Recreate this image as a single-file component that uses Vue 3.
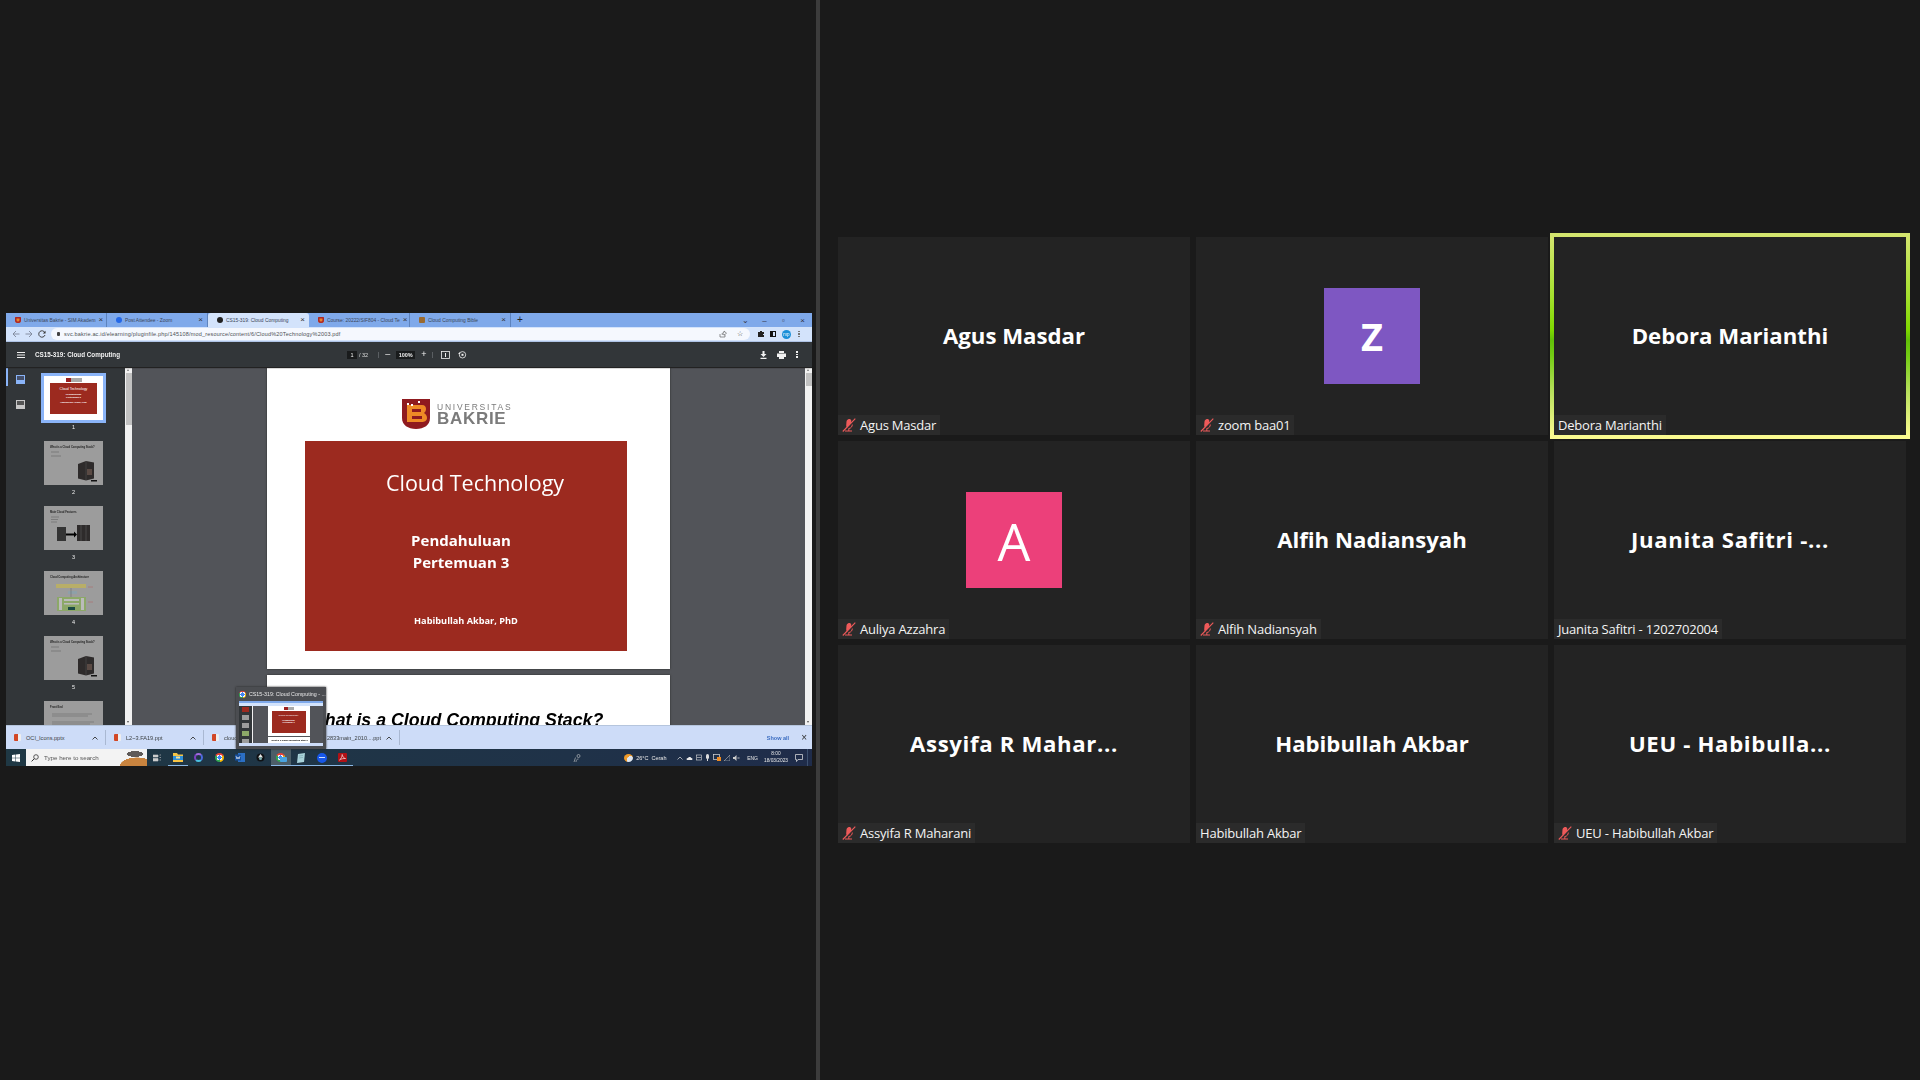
<script setup>
const tiles = [
  { name: 'Agus Masdar', label: 'Agus Masdar', muted: true },
  { name: 'Z', label: 'zoom baa01', muted: true, avatar: '#7e57c2', size: 'bold' },
  { name: 'Debora Marianthi', label: 'Debora Marianthi', active: true },
  { name: 'A', label: 'Auliya Azzahra', muted: true, avatar: '#ec407a', size: 'large' },
  { name: 'Alfih Nadiansyah', label: 'Alfih Nadiansyah', muted: true },
  { name: 'Juanita Safitri -...', label: 'Juanita Safitri - 1202702004', cut: true },
  { name: 'Assyifa R Mahar...', label: 'Assyifa R Maharani', muted: true, cut: true },
  { name: 'Habibullah Akbar', label: 'Habibullah Akbar' },
  { name: 'UEU - Habibulla...', label: 'UEU - Habibullah Akbar', muted: true, cut: true },
]

const tabs = [
  { title: 'Universitas Bakrie - SIM Akadem', icon: 'ub' },
  { title: 'Post Attendee - Zoom', icon: 'zm' },
  { title: 'CS15-319: Cloud Computing', icon: 'globe', active: true },
  { title: 'Course: 20222/SIF804 - Cloud Te', icon: 'ub' },
  { title: 'Cloud Computing Bible', icon: 'book' },
]

const thumbs = [
  { n: 1, kind: 'cover' },
  { n: 2, kind: 'tower', title: 'What is a Cloud Computing Stack?' },
  { n: 3, kind: 'servers', title: 'Main Cloud Features' },
  { n: 4, kind: 'arch', title: 'Cloud Computing Architecture' },
  { n: 5, kind: 'tower', title: 'What is a Cloud Computing Stack?' },
  { n: 6, kind: 'text', title: 'Front End' },
]

const downloads = [
  { file: 'OCI_Icons.pptx', width: 100 },
  { file: 'L2~3.FA19.ppt', width: 98 },
  { file: 'cloud', tail: '2833main_2010....ppt', width: 196 },
]
</script>

<template>
  <div class="meeting">
    <section class="share-pane">
      <div class="share">
        <div class="tabstrip">
          <div v-for="t in tabs" :key="t.title + t.icon" class="tab" :class="{ on: t.active }">
            <span class="fav" :class="t.icon"></span>
            <span class="tab-title">{{ t.title }}</span>
            <span class="tab-x">×</span>
          </div>
          <span class="tab-plus">+</span>
          <span class="grow"></span>
          <span class="win">⌄</span><span class="win">–</span><span class="win">▫</span><span class="win">×</span>
        </div>

        <div class="addrbar">
          <svg class="nav" width="8" height="8" viewBox="0 0 8 8"><path d="M7.500 4H1M4 1L1 4l3 3" fill="none" stroke="#7d8798" stroke-width=".9"/></svg>
          <svg class="nav" width="8" height="8" viewBox="0 0 8 8"><path d="M.5 4H7M4 1l3 3-3 3" fill="none" stroke="#7d8798" stroke-width=".9"/></svg>
          <svg class="nav" width="8" height="8" viewBox="0 0 8 8"><path d="M6.800 2.500A3.200 3.200 0 1 0 7 5" fill="none" stroke="#333" stroke-width=".9"/><path d="M7.500.8v2.700H4.800z" fill="#333"/></svg>
          <div class="omnibox">
            <span class="lock"></span>
            <span class="url">svc.bakrie.ac.id/elearning/pluginfile.php/145108/mod_resource/content/6/Cloud%20Technology%2003.pdf</span>
            <span class="grow"></span>
            <svg width="8" height="8" viewBox="0 0 8 8"><path d="M1 4v3h5V5M3 4.500C3 3 4 2.500 5 2.500V1l2.500 2.200L5 5.200V4C4 4 3.500 4 3 4.500z" fill="none" stroke="#666" stroke-width=".7"/></svg>
            <span class="star">☆</span>
          </div>
          <svg class="ext" width="8" height="8" viewBox="0 0 8 8"><path d="M1 2h2V1h2v1h2v2H6v1h1v2H1z" fill="#222"/></svg>
          <span class="sidepanel"></span>
          <span class="profile">mp</span>
          <span class="kebab dark"><i></i><i></i><i></i></span>
        </div>

        <div class="pdfbar">
          <svg class="burger" width="8" height="6" viewBox="0 0 8 6"><path d="M0 .5h8M0 3h8M0 5.500h8" stroke="#f1f1f1"/></svg>
          <span class="doc-title">CS15-319: Cloud Computing</span>
          <div class="pdf-center">
            <span class="pagebox">1</span>
            <span class="pagecount">/ 32</span>
            <span class="vsep"></span>
            <span class="zoom-btn">–</span>
            <span class="zoombox">100%</span>
            <span class="zoom-btn">+</span>
            <span class="vsep"></span>
            <svg class="fit" width="9" height="8" viewBox="0 0 9 8"><rect x=".5" y=".5" width="8" height="7" fill="none" stroke="#f1f1f1" stroke-width=".8"/><path d="M4.500 2v4" stroke="#f1f1f1"/></svg>
            <svg class="rot" width="9" height="9" viewBox="0 0 9 9"><circle cx="4.500" cy="4.800" r="3.200" fill="none" stroke="#f1f1f1" stroke-width=".8"/><path d="M0 4l2-2v2z" fill="#f1f1f1"/><rect x="3.500" y="3.800" width="2" height="2" fill="#f1f1f1"/></svg>
          </div>
          <div class="pdf-right">
            <svg width="7" height="8" viewBox="0 0 7 8"><path d="M2.500 0h2v3H6.500L3.500 6 .5 3h2zM.5 6.800h6V8h-6z" fill="#f1f1f1"/></svg>
            <svg width="9" height="8" viewBox="0 0 9 8"><path d="M2 0h5v2H2zM0 2.500h9V6H7v2H2V6H0z" fill="#f1f1f1"/></svg>
            <span class="kebab"><i></i><i></i><i></i></span>
          </div>
        </div>

        <div class="pdfbody">
          <aside class="sidebar">
            <div class="rail">
              <span class="rail-mark"></span>
              <span class="rail-icon blue"></span>
              <span class="rail-icon"></span>
            </div>
            <div class="thumblist">
              <div v-for="t in thumbs" :key="t.n" class="thumbitem">
                <div class="thumb" :class="{ current: t.kind === 'cover' }">
                  <template v-if="t.kind === 'cover'">
                    <span class="tc-logo"></span>
                    <div class="tc-red">
                      <span class="tc-title">Cloud Technology</span>
                      <span class="tc-sub">Pendahuluan<br>Pertemuan 3</span>
                      <span class="tc-sub">Habibullah Akbar, PhD</span>
                    </div>
                  </template>
                  <svg v-else width="59" height="44" viewBox="0 0 59 44">
                    <text x="6" y="7" font-size="2.700" font-weight="700" font-family="Liberation Sans" fill="#222">{{ t.title }}</text>
                    <g v-if="t.kind === 'tower'">
                      <path d="M7 11h8M7 15h10" stroke="#666" stroke-width=".6"/>
                      <path d="M34 23l8-3 8 1.500v16l-8 2-8-2z" fill="#2e2b2b"/>
                      <path d="M42 20v19" stroke="#555" stroke-width=".5"/>
                      <rect x="43" y="28" width="5" height="6" fill="#5a4a44"/>
                      <rect x="47" y="39" width="6" height="1.500" fill="#111"/>
                    </g>
                    <g v-else-if="t.kind === 'servers'">
                      <path d="M7 11h8M7 13.500h7M7 16h6" stroke="#666" stroke-width=".6"/>
                      <rect x="13" y="21" width="9" height="14" fill="#343434"/>
                      <path d="M22 27.500h8v-2l3 3-3 3v-2h-8z" fill="#000"/>
                      <rect x="33" y="19" width="13" height="16" fill="#2e2b2b"/>
                      <path d="M37 19v16M42 19v16" stroke="#666" stroke-width=".5"/>
                    </g>
                    <g v-else-if="t.kind === 'arch'">
                      <rect x="12" y="13" width="30" height="4" fill="#b8ae68"/>
                      <rect x="24" y="20" width="9" height="3" fill="#8ea0a8"/>
                      <path d="M27 17v9" stroke="#666" stroke-width=".5"/>
                      <rect x="13" y="26" width="29" height="14" fill="#8ca868"/>
                      <rect x="15" y="27" width="3" height="12" fill="#bbb"/>
                      <rect x="37" y="27" width="3" height="12" fill="#bbb"/>
                      <rect x="20" y="28" width="15" height="2" fill="#bbb"/>
                      <rect x="20" y="32" width="15" height="1.500" fill="#bbb"/>
                      <rect x="24" y="36" width="7" height="3" fill="#1c4a44"/>
                      <path d="M44 16h5M44 31h5" stroke="#a77" stroke-width=".8"/>
                    </g>
                    <g v-else>
                      <path d="M8 13h40M8 15h36M8 21h42M8 23h38M8 25h30" stroke="#6c6c6c" stroke-width=".6"/>
                    </g>
                  </svg>
                </div>
                <span class="thumbno">{{ t.n }}</span>
              </div>
            </div>
          </aside>

          <div class="scroll left">
            <span class="sc-up"></span><span class="sc-thumb long"></span><span class="grow"></span><span class="sc-down"></span>
          </div>

          <div class="viewer">
            <div class="page first">
              <div class="brand">
                <svg class="shield" width="28" height="30" viewBox="0 0 28 30">
                  <path d="M0 0h28v19c0 7-6 11-14 11S0 26 0 19z" fill="#8f1a1f"/>
                  <path d="M5 6h15c3 0 4 2 4 4s-1 3-2 4c2 1 3 3 3 5 0 3-3 4-5 4H5zM10 10v3h9v-3zM10 17v3h10v-3z" fill="#ee8a26"/>
                  <rect x="5" y="4" width="2" height="2" fill="#fff"/><rect x="9" y="5" width="2" height="2" fill="#fff"/><rect x="16" y="2" width="2" height="2" fill="#fff"/>
                </svg>
                <div class="brand-text">
                  <span class="uni">UNIVERSITAS</span>
                  <span class="bakrie">BAKRIE</span>
                </div>
              </div>
              <div class="slide">
                <h1>Cloud Technology</h1>
                <p class="sub">Pendahuluan<br>Pertemuan 3</p>
                <p class="presenter">Habibullah Akbar, PhD</p>
              </div>
            </div>
            <div class="page second">
              <h2>What is a Cloud Computing Stack?</h2>
            </div>
          </div>

          <div class="scroll">
            <span class="sc-up"></span><span class="sc-thumb"></span><span class="grow"></span><span class="sc-down"></span>
          </div>
        </div>

        <div class="downloads">
          <div v-for="d in downloads" :key="d.file" class="dl" :style="{ width: d.width + 'px' }">
            <span class="ppt"></span>
            <span class="dl-name">{{ d.file }}</span>
            <span v-if="d.tail" class="dl-tail">{{ d.tail }}</span>
            <svg width="6" height="4" viewBox="0 0 6 4"><path d="M.5 3.500L3 1l2.500 2.500" fill="none" stroke="#333" stroke-width=".9"/></svg>
          </div>
          <span class="grow"></span>
          <span class="showall">Show all</span>
          <span class="dl-x">×</span>
        </div>

        <div class="taskbar">
          <div class="start">
            <svg width="8" height="8" viewBox="0 0 8 8"><path d="M0 1l3.500-.5V3.700H0zM4 .4L8 0v3.700H4zM0 4.200h3.500v3.300L0 7zM4 4.200h4V8l-4-.5z" fill="#fff"/></svg>
          </div>
          <div class="search">
            <svg width="8" height="8" viewBox="0 0 8 8"><circle cx="5" cy="3" r="2.300" fill="none" stroke="#333" stroke-width=".8"/><path d="M3.300 4.700L.6 7.400" stroke="#333"/></svg>
            <span>Type here to search</span>
            <span class="grow"></span>
            <span class="search-art"></span>
          </div>
          <div class="tb-icons">
            <span class="tb"><svg width="9" height="8" viewBox="0 0 9 8"><path d="M0 1h5v2H0zM0 4.500h5v2.500H0zM6.500 1H8M6.500 3.500H8M6.500 6H8" fill="#ccc" stroke="#ccc" stroke-width=".6"/></svg></span>
            <span class="tb open"><svg width="10" height="9" viewBox="0 0 10 9"><path d="M0 0h4l1 1.500h5V9H0z" fill="#f6c445"/><rect y="3" width="10" height="4" fill="#2f8fd8"/><rect x="3" y="3.500" width="4" height="2" fill="#f6e39b"/></svg></span>
            <span class="tb"><span class="cortana"></span></span>
            <span class="tb"><span class="chrome"></span></span>
            <span class="tb"><svg width="10" height="9" viewBox="0 0 10 9"><rect x="3" width="7" height="9" fill="#2b6fc4"/><rect y="1.500" width="6" height="6" fill="#174f9c"/><path d="M1 3l1 3 1-2 1 2 1-3" fill="none" stroke="#fff" stroke-width=".6"/></svg></span>
            <span class="tb"><svg width="9" height="9" viewBox="0 0 9 9"><circle cx="4.500" cy="4.500" r="4" fill="#0f1114"/><path d="M4.500 1L7 4.500H2z" fill="#e8e8e8"/><circle cx="4.500" cy="5.500" r="1.500" fill="#7aa"/></svg></span>
            <span class="tb current open"><span class="chrome"><i class="overlay"></i></span></span>
            <span class="tb open"><svg width="10" height="10" viewBox="0 0 10 10"><path d="M2 1l7-1-1 9-7 1z" fill="#a9d3da"/><path d="M3 3l4-.6M3 5l4-.6" stroke="#6f9ba6" stroke-width=".5"/></svg></span>
            <span class="tb open"><span class="zoomdot"></span></span>
            <span class="tb open"><svg width="9" height="9" viewBox="0 0 9 9"><rect width="9" height="9" rx="1" fill="#b01116"/><path d="M1.500 7C3 6 4.500 3 4.200 1.500 4 3 6 5.500 7.500 5.500 6 5.300 3 5.800 1.500 7z" fill="none" stroke="#fff" stroke-width=".6"/></svg></span>
          </div>
          <span class="grow"></span>
          <svg class="people" width="8" height="8" viewBox="0 0 8 8"><circle cx="5.500" cy="2" r="1.500" fill="none" stroke="#ccc" stroke-width=".6"/><path d="M3 8c0-2 1-3 2.500-3M1 8l1.500-4.500" stroke="#ccc" stroke-width=".6" fill="none"/></svg>
          <span class="weather"></span>
          <span class="temp">26°C &nbsp;Cerah</span>
          <div class="tray">
            <svg width="6" height="4" viewBox="0 0 6 4"><path d="M.5 3.500L3 1l2.500 2.500" fill="none" stroke="#ddd" stroke-width=".7"/></svg>
            <svg width="7" height="4" viewBox="0 0 7 4"><path d="M1 4C0 3 .5 2 2 2c.3-1.500 3-1.500 3.300 0C6.500 2 7 3 6 4z" fill="#e8e8e8"/></svg>
            <svg width="6" height="7" viewBox="0 0 6 7"><rect x=".5" y="1" width="5" height="5" fill="none" stroke="#ddd" stroke-width=".6"/><path d="M1 3.500h4" stroke="#ddd" stroke-width=".6"/></svg>
            <svg width="5" height="7" viewBox="0 0 5 7"><rect x="1" width="3" height="5" rx="1.500" fill="#ddd"/><path d="M2.500 5v2" stroke="#ddd"/></svg>
            <svg width="8" height="7" viewBox="0 0 8 7"><rect x=".5" y=".5" width="6" height="5" fill="none" stroke="#ddd" stroke-width=".7"/><rect x="4" y="3" width="4" height="4" fill="#ed8a21"/></svg>
            <svg width="6" height="6" viewBox="0 0 6 6"><path d="M0 6L6 0v6z" fill="none" stroke="#bbb" stroke-width=".6"/></svg>
            <svg width="7" height="6" viewBox="0 0 7 6"><path d="M0 2h1.500L3.500 0v6L1.500 4H0z" fill="#ccc"/><path d="M4.500 2l2 2M6.500 2l-2 2" stroke="#ccc" stroke-width=".5"/></svg>
          </div>
          <span class="lang">ENG</span>
          <span class="clock">8:00<br>18/03/2023</span>
          <svg class="notif" width="8" height="8" viewBox="0 0 8 8"><path d="M.5.500h7v5H3L1.500 7.500v-2h-1z" fill="none" stroke="#e8e8e8" stroke-width=".7"/></svg>
          <span class="corner"></span>
        </div>

        <div class="preview">
          <div class="preview-head">
            <span class="chrome"></span>
            <span>CS15-319: Cloud Computing - ...</span>
          </div>
          <div class="preview-shot">
            <div class="ps-top"></div>
            <div class="ps-body">
              <div class="ps-side">
                <i class="red"></i><i></i><i></i><i class="green"></i><i></i>
              </div>
              <div class="ps-main">
                <div class="ps-page">
                  <span class="ps-logo"></span>
                  <div class="ps-red">
                    <span>Cloud Technology</span>
                    <span class="ps-small">Pendahuluan<br>Pertemuan 3</span>
                  </div>
                </div>
                <div class="ps-page2">What is a Cloud Computing Stack?</div>
              </div>
            </div>
            <div class="ps-bottom"></div>
          </div>
        </div>
      </div>
    </section>

    <div class="divider"></div>

    <section class="gallery">
      <div class="grid">
        <div v-for="t in tiles" :key="t.label" class="tile" :class="{ active: t.active }">
          <div v-if="t.avatar" class="avatar" :class="t.size" :style="{ background: t.avatar }">{{ t.name }}</div>
          <div v-else class="bigname" :class="{ cut: t.cut }">{{ t.name }}</div>
          <div class="label">
            <svg v-if="t.muted" class="mute" width="14" height="14" viewBox="0 0 14 14">
              <path d="M6 1.500c1.300-.8 3-.3 3.300 1.200L9 5 5 9.500c-.6-.5-.8-1.200-.8-2L4.500 3.500C4.600 2.700 5.200 1.900 6 1.500z" fill="#ee5a5a"/>
              <path d="M3 13h7M6.800 10.500V13M10.300 6.500c0 2-1.400 4-3.600 4" fill="none" stroke="#ee5a5a" stroke-width="1"/>
              <path d="M.8 13.500L13.300.6" stroke="#ee5a5a" stroke-width="1.100"/>
            </svg>
            <span>{{ t.label }}</span>
          </div>
        </div>
      </div>
    </section>
  </div>
</template>

<style>
html, body {
  margin: 0;
  background: #1a1a1a;
}
</style>

<style scoped>
.meeting {
  display: flex;
  width: 1920px;
  height: 1080px;
  overflow: hidden;
  background: #1a1a1a;
  font-family: "Open Sans", "Liberation Sans", sans-serif;
}

.grow { flex: 1; }

/* left side: shared screen */
.share-pane {
  width: 816px;
  flex: none;
  display: flex;
  align-items: center;
  box-sizing: border-box;
  padding: 0 4px 1px 6px;
}

.share {
  position: relative;
  width: 806px;
  height: 453px;
  display: flex;
  flex-direction: column;
  filter: blur(0.3px);
  font-family: "Liberation Sans", sans-serif;
  overflow: hidden;
}

.tabstrip {
  height: 14px;
  flex: none;
  display: flex;
  align-items: center;
  background: #7fa9ea;
  color: #333;
  font-size: 4.900px;
}

.tab {
  width: 101px;
  height: 14px;
  box-sizing: border-box;
  display: flex;
  align-items: center;
  gap: 3px;
  padding: 0 4px 0 9px;
  border-right: 1px solid #5d83bd;
  color: #3c4658;
}

.tab.on {
  background: #d3e3fb;
  border-radius: 3px 3px 0 0;
  border-right: none;
}

.tab-title {
  flex: 1;
  white-space: nowrap;
}

.tab-x { font-size: 8px; line-height: 8px; color: #333; }

.fav {
  width: 6px;
  height: 6px;
  flex: none;
  border-radius: 1px;
}
.fav.ub { background: #a8252a; border-radius: 1px 1px 3px 3px; box-shadow: inset 0 0 0 1.500px #a8252a, inset 0 0 0 3px #e8842a; }
.fav.zm { background: #2468e8; border-radius: 50%; }
.fav.globe { background: #222; border-radius: 50%; }
.fav.book { background: #9a6a30; }

.tab-plus {
  margin-left: 6px;
  font-size: 10px;
  line-height: 10px;
  color: #222;
}

.win {
  width: 19px;
  text-align: center;
  font-size: 8px;
  color: #334;
}

.addrbar {
  height: 15px;
  flex: none;
  display: flex;
  align-items: center;
  background: #d3e3fb;
  border-bottom: 1px solid #aec3e6;
  box-sizing: border-box;
}

.nav {
  width: 8px;
  margin-left: 5px;
  flex: none;
}
.nav:first-child { margin-left: 6px; }

.omnibox {
  width: 699px;
  margin-left: 5px;
  height: 12px;
  border-radius: 6px;
  background: #f5f8fe;
  display: flex;
  align-items: center;
  gap: 4px;
  padding: 0 4px 0 6px;
  box-sizing: border-box;
}

.lock {
  width: 3px;
  height: 4px;
  background: #444;
  border-radius: 1px;
}

.url {
  font-size: 5.500px;
  color: #4c5054;
  white-space: nowrap;
  letter-spacing: 0.19px;
}

.star { font-size: 7px; color: #333; margin: 0 3px 0 6px; }
.ext { margin-left: 7px; }

.sidepanel {
  width: 6px;
  height: 6px;
  margin-left: 5px;
  border: 1px solid #111;
  border-left-width: 3px;
  box-sizing: border-box;
}

.profile {
  width: 9px;
  height: 9px;
  margin-left: 6px;
  border-radius: 50%;
  background: #1a8fd8;
  color: #fff;
  font-size: 4.500px;
  line-height: 9px;
  text-align: center;
}

.kebab {
  display: inline-flex;
  flex-direction: column;
  gap: 1px;
  width: 2px;
}
.kebab i {
  width: 1.500px;
  height: 1.500px;
  background: #f1f1f1;
}
.kebab.dark { margin-left: 7px; }
.kebab.dark i { background: #777; }

.pdfbar {
  height: 25px;
  flex: none;
  position: relative;
  display: flex;
  align-items: center;
  background: #323639;
  color: #f1f1f1;
  box-shadow: 0 1px 1px #222;
  z-index: 1;
}

.burger { margin-left: 11px; }

.doc-title {
  margin-left: 10px;
  font-size: 6.300px;
  font-weight: 700;
  width: 312px;
  white-space: nowrap;
}

.pdf-center {
  display: flex;
  align-items: center;
  gap: 6px;
  font-size: 5.500px;
}

.pagebox {
  width: 10px;
  height: 8px;
  line-height: 8px;
  text-align: center;
  background: #191b1c;
}

.pagecount { margin-right: 4px; color: #ddd; margin-left: -4px; }

.vsep {
  width: 1px;
  height: 6px;
  background: #5a5e62;
}

.zoom-btn {
  font-size: 9px;
  line-height: 9px;
}

.zoombox {
  width: 19px;
  height: 8px;
  line-height: 8px;
  text-align: center;
  background: #191b1c;
  font-weight: 700;
}

.fit { margin-left: 2px; }
.rot { margin-left: 2px; }

.pdf-right {
  margin-left: auto;
  margin-right: 14px;
  display: flex;
  align-items: center;
  gap: 10px;
}

.pdfbody {
  height: 358px;
  flex: none;
  display: flex;
  background: #525459;
  overflow: hidden;
}

.sidebar {
  width: 119px;
  flex: none;
  display: flex;
  background: #323639;
  overflow: hidden;
}

.rail {
  width: 28px;
  flex: none;
  position: relative;
  display: flex;
  flex-direction: column;
  align-items: center;
  gap: 16px;
  padding-top: 8px;
}

.rail-mark {
  position: absolute;
  left: 0;
  top: 0;
  width: 2px;
  height: 19px;
  background: #8ab4f8;
}

.rail-icon {
  width: 7px;
  height: 7px;
  border: 1px solid #c8c8c8;
  background: linear-gradient(#555 55%, #c8c8c8 55%);
}
.rail-icon.blue {
  border-color: #8ab4f8;
  background: linear-gradient(#45506a 55%, #8ab4f8 55%);
}

.thumblist {
  padding: 9px 0 0 10px;
  color: #f1f1f1;
}

.thumbitem {
  width: 59px;
  height: 65px;
  text-align: center;
}

.thumb {
  width: 59px;
  height: 44px;
  background: #9c9c9c;
  overflow: hidden;
}

.thumb.current {
  background: #fff;
  box-shadow: 0 0 0 3px #8ab4f8;
  display: flex;
  flex-direction: column;
  align-items: center;
}

.tc-logo {
  width: 16px;
  height: 4px;
  margin: 2px 0 1px;
  background: linear-gradient(90deg, #9a2020 30%, #aaa 30%);
}

.tc-red {
  width: 47px;
  height: 31px;
  background: #9c2a1f;
  color: #fff;
  display: flex;
  flex-direction: column;
  align-items: center;
  gap: 2px;
  padding-top: 4px;
  box-sizing: border-box;
}

.tc-title { font-size: 3.500px; }
.tc-sub { font-size: 2.500px; font-weight: 700; line-height: 3px; }

.thumbno {
  display: block;
  height: 14px;
  line-height: 14px;
  font-size: 5.500px;
}

.scroll {
  width: 7px;
  flex: none;
  display: flex;
  flex-direction: column;
  align-items: stretch;
  background: #f1f1f1;
}

.sc-up, .sc-down {
  height: 6px;
  position: relative;
}
.sc-up::after, .sc-down::after {
  content: "";
  position: absolute;
  left: 2px;
  top: 2px;
  border-left: 1.500px solid transparent;
  border-right: 1.500px solid transparent;
}
.sc-up::after { border-bottom: 2px solid #777; }
.sc-down::after { border-top: 2px solid #505050; }

.sc-thumb {
  height: 13px;
  margin: 0 .5px;
  background: #c1c1c1;
}
.sc-thumb.long { height: 52px; }

.viewer {
  flex: 1;
  min-width: 0;
  display: flex;
  flex-direction: column;
  align-items: flex-start;
  gap: 6px;
  padding-left: 135px;
  overflow: hidden;
}

.page {
  width: 403px;
  flex: none;
  background: #fff;
  box-shadow: 0 0 2px #2a2a2a;
  box-sizing: border-box;
}

.page.first {
  height: 302px;
  padding: 32px 43px 0 38px;
}

.brand {
  display: flex;
  align-items: center;
  gap: 7px;
  height: 30px;
  margin-left: 97px;
}

.brand-text {
  display: flex;
  flex-direction: column;
  color: #7b7b7b;
}

.uni {
  font-size: 8.500px;
  line-height: 9px;
  letter-spacing: 1.750px;
  white-space: nowrap;
}

.bakrie {
  font-size: 17px;
  line-height: 14px;
  font-weight: 700;
  letter-spacing: 0.7px;
}

.slide {
  width: 322px;
  height: 210px;
  margin-top: 12px;
  background: #9c2a1f;
  color: #fff;
  font-family: "Open Sans", sans-serif;
  overflow: hidden;
}

.slide h1 {
  margin: 26px 0 0 0;
  padding-left: 18px;
  text-align: center;
  font-size: 21.500px;
  line-height: 32px;
  font-weight: 400;
}

.slide .sub {
  margin: 31px 0 0 0;
  padding-right: 10px;
  text-align: center;
  font-size: 15px;
  line-height: 21.500px;
  font-weight: 700;
}

.slide .presenter {
  margin: 41px 0 0 0;
  text-align: center;
  font-size: 9.200px;
  line-height: 14px;
  font-weight: 700;
}

.page.second {
  height: 120px;
  padding: 35px 0 0 41px;
}

.page.second h2 {
  margin: 0;
  font-size: 17.800px;
  line-height: 20px;
  font-style: italic;
  font-weight: 700;
  color: #000;
  white-space: nowrap;
}

.downloads {
  height: 24px;
  flex: none;
  display: flex;
  align-items: center;
  background: #cddcf8;
  border-top: 1px solid #b5c5dd;
  box-sizing: border-box;
  font-size: 5.600px;
  color: #3c4043;
  z-index: 1;
}

.dl {
  height: 15px;
  box-sizing: border-box;
  display: flex;
  align-items: center;
  gap: 5px;
  padding: 0 7px 0 8px;
  border-right: 1px solid #a9b8d2;
}

.dl-name {
  flex: 1;
  white-space: nowrap;
}

.dl-tail { white-space: nowrap; }

.ppt {
  width: 7px;
  height: 7px;
  flex: none;
  border-radius: 1px;
  background: linear-gradient(90deg, #d24726 55%, #eee 55%);
}

.showall {
  color: #3a6cc0;
  font-weight: 700;
  font-size: 5.500px;
}

.dl-x {
  margin: 0 5px 0 12px;
  font-size: 10px;
  line-height: 10px;
  color: #333;
}

.taskbar {
  height: 17px;
  flex: none;
  display: flex;
  align-items: center;
  background: linear-gradient(90deg, #1f3844, #1f3248 70%, #1f2c4a);
  color: #e8e8e8;
  font-size: 5.500px;
  z-index: 1;
}

.start {
  width: 20px;
  height: 17px;
  display: flex;
  align-items: center;
  justify-content: center;
}

.search {
  width: 121px;
  height: 17px;
  display: flex;
  align-items: center;
  gap: 5px;
  padding-left: 5px;
  box-sizing: border-box;
  background: #f3f3f3;
  color: #555;
  font-size: 6.200px;
  overflow: hidden;
}

.search-art {
  width: 32px;
  height: 17px;
  background:
    radial-gradient(ellipse 12px 4px at 20px 5px, #5f5a58 70%, transparent 72%),
    radial-gradient(ellipse 24px 12px at 22px 17px, #c9843f 70%, transparent 72%);
}

.tb-icons {
  display: flex;
  margin-left: 0;
}

.tb {
  width: 20.600px;
  height: 17px;
  display: flex;
  align-items: center;
  justify-content: center;
  box-sizing: border-box;
}

.tb.open { box-shadow: inset 0 -1px 0 #8ab8e6; }
.tb.current { background: #4c5e68; }

.chrome {
  position: relative;
  display: inline-block;
  width: 9px;
  height: 9px;
  flex: none;
  border-radius: 50%;
  background:
    radial-gradient(circle, #4285f4 0 2px, #fff 2.100px 2.800px, transparent 2.900px),
    conic-gradient(#ea4335 0 60deg, #fbbc05 60deg 180deg, #34a853 180deg 300deg, #ea4335 300deg);
}

.overlay {
  position: absolute;
  right: -2px;
  bottom: 0;
  width: 7px;
  height: 5px;
  border-radius: 1px;
  background: #4aa3e0;
}

.cortana {
  width: 5px;
  height: 5px;
  border-radius: 50%;
  border: 2px solid;
  border-color: #a06ae0 #4a6ae0 #4ac0e0 #7a40c0;
}

.zoomdot {
  width: 10px;
  height: 10px;
  border-radius: 50%;
  background: #1757e8;
  position: relative;
}
.zoomdot::after {
  content: "";
  position: absolute;
  left: 2px;
  right: 2px;
  top: 4.500px;
  height: 1px;
  background: #cfe0ff;
}

.people { margin-right: 43px; }

.weather {
  width: 9px;
  height: 8px;
  border-radius: 50%;
  background: radial-gradient(circle at 70% 70%, #dfe6ee 40%, transparent 42%), #f09a28;
}

.temp {
  margin-left: 3px;
  white-space: nowrap;
  width: 41px;
}

.tray {
  display: flex;
  align-items: center;
  gap: 3px;
}

.lang { margin-left: 7px; font-size: 5px; }

.clock {
  width: 32px;
  margin-left: 2px;
  font-size: 4.800px;
  line-height: 6.500px;
  text-align: center;
}

.notif { margin-left: 3px; }

.corner {
  width: 5px;
  margin-left: 4px;
  height: 17px;
  border-left: 1px solid #3d5170;
  box-sizing: border-box;
}

.preview {
  position: absolute;
  left: 230px;
  top: 374px;
  width: 90px;
  height: 62px;
  background: #4b4d51;
  box-shadow: 0 0 2px #222;
  z-index: 2;
  color: #e8e8e8;
  font-size: 5.300px;
  display: flex;
  flex-direction: column;
}

.preview-head {
  height: 14px;
  flex: none;
  display: flex;
  align-items: center;
  gap: 3px;
  padding-left: 3px;
  white-space: nowrap;
  overflow: hidden;
}
.preview-head .chrome { width: 7px; height: 7px; }

.preview-shot {
  margin: 0 3px 3px;
  flex: 1;
  display: flex;
  flex-direction: column;
  overflow: hidden;
  background: #525459;
}

.ps-top {
  height: 5px;
  flex: none;
  background: linear-gradient(#7fa9ea 50%, #d3e3fb 50%);
}

.ps-body {
  flex: 1;
  display: flex;
  min-height: 0;
}

.ps-side {
  width: 13px;
  flex: none;
  background: #323639;
  display: flex;
  flex-direction: column;
  align-items: center;
  gap: 3px;
  padding-top: 1px;
  margin-right: 1px;
  border-right: 1px solid #f1f1f1;
}
.ps-side i { width: 7px; height: 5px; flex: none; background: #9c9c9c; }
.ps-side i.red { background: #9c2a1f; }
.ps-side i.green { background: #8ca868; }

.ps-main {
  flex: 1;
  min-width: 0;
  display: flex;
  flex-direction: column;
  align-items: center;
  gap: 1px;
}

.ps-page {
  width: 42px;
  height: 30px;
  background: #fff;
  display: flex;
  flex-direction: column;
  align-items: center;
  flex: none;
}

.ps-logo {
  width: 10px;
  height: 3px;
  margin: 1px 0;
  background: linear-gradient(90deg, #9a2020 40%, #aaa 40%);
}

.ps-red {
  width: 34px;
  height: 22px;
  background: #9c2a1f;
  color: #fff;
  font-size: 2.500px;
  display: flex;
  flex-direction: column;
  align-items: center;
  gap: 2px;
  padding-top: 3px;
  box-sizing: border-box;
}

.ps-small { font-size: 2px; font-weight: 700; text-align: center; }

.ps-page2 {
  width: 42px;
  flex: 1;
  background: #fff;
  color: #000;
  font-size: 2.200px;
  font-weight: 700;
  font-style: italic;
  white-space: nowrap;
  overflow: hidden;
  padding-top: 2px;
  padding-left: 4px;
  box-sizing: border-box;
}

.ps-bottom {
  height: 3px;
  flex: none;
  background: #cddcf8;
}

.divider {
  width: 4px;
  flex: none;
  background: #3c3c3c;
}

/* right side: gallery */
.gallery {
  flex: 1;
  display: flex;
  align-items: center;
  box-sizing: border-box;
  padding-left: 18px;
}

.grid {
  display: grid;
  grid-template-columns: repeat(3, 352px);
  grid-auto-rows: 198px;
  gap: 6px;
}

.tile {
  position: relative;
  display: grid;
  background: #232323;
  color: #fff;
}

.tile.active::after {
  content: "";
  position: absolute;
  inset: -4px;
  border: 4px solid;
  border-image: linear-gradient(#d4e56e 0%, #a5e02e 30%, #7fd800 47%, #62bf08 52%, #74cc14 60%, #b8df5c 78%, #fbfb90 100%) 1;
  pointer-events: none;
}

.bigname, .avatar, .label { grid-area: 1 / 1; }

.bigname {
  place-self: center;
  margin-bottom: 2px;
  font-size: 22.200px;
  font-weight: 700;
  white-space: nowrap;
}

.bigname.cut { letter-spacing: 0.65px; }

.avatar {
  place-self: center;
  width: 96px;
  height: 96px;
  display: flex;
  align-items: center;
  justify-content: center;
}

.avatar.large {
  font-size: 52px;
  font-weight: 400;
}

.avatar.bold {
  font-size: 38px;
  font-weight: 700;
}

.label {
  place-self: end start;
  height: 20px;
  display: flex;
  align-items: center;
  gap: 4px;
  padding: 0 4px;
  background: #2b2b2b;
  font-size: 13px;
  letter-spacing: -0.2px;
  white-space: nowrap;
  color: #f4f4f4;
}

.mute { flex: none; }
</style>
